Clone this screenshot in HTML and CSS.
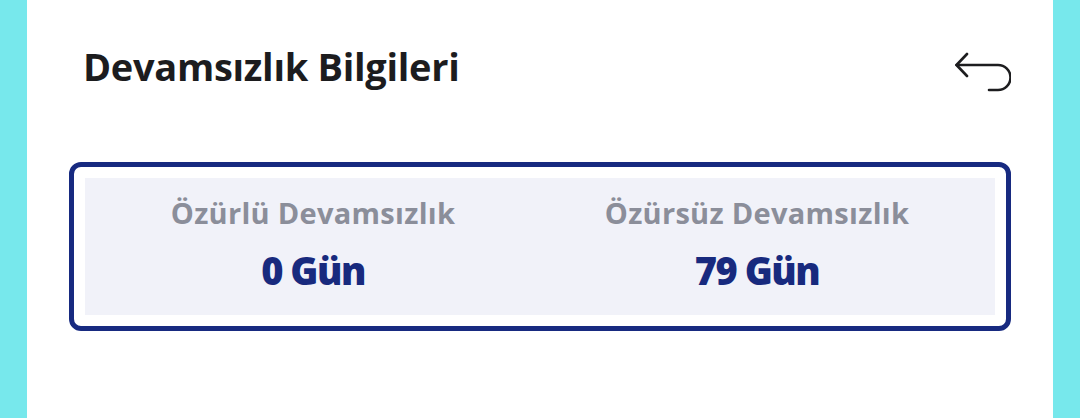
FILE: index.html
```html
<!DOCTYPE html>
<html lang="tr">
<head>
  <meta charset="UTF-8">
  <meta name="viewport" content="width=device-width, initial-scale=1.0">
  <title>Devamsızlık Bilgileri</title>
  <link rel="stylesheet" href="styles.css">
</head>
<body>
  <div class="panel">
    <div class="panel-header">
      <h2>Devamsızlık Bilgileri</h2>
      <button type="button" class="back-btn" aria-label="Geri">
        <svg width="56" height="40" viewBox="0 0 56 40" fill="none" stroke="#1d1d1f" stroke-width="2.6" stroke-linecap="round" stroke-linejoin="round">
          <path d="M12 2 L1.5 13 L12 24"/>
          <path d="M1.5 13 H43 A12.5 12.5 0 0 1 43 38 H34"/>
        </svg>
      </button>
    </div>

    <div class="absence-card">
      <div class="absence-summary">
        <div class="absence-item">
          <span class="absence-label">Özürlü Devamsızlık</span>
          <span class="absence-value">0 Gün</span>
        </div>
        <div class="absence-item">
          <span class="absence-label">Özürsüz Devamsızlık</span>
          <span class="absence-value">79 Gün</span>
        </div>
      </div>
    </div>
  </div>
</body>
</html>
```

FILE: styles.css
```css
body {
  font-family: 'Open Sans', 'Noto Sans', sans-serif;
  background-color: #77e8ec;
  margin: 0;
  height: 418px;
  overflow: hidden;
}

.panel {
  background-color: #fff;
  margin: 0 27px;
  height: 418px;
  padding: 44px 42px 0;
  box-sizing: border-box;
}

.panel-header {
  display: flex;
  justify-content: space-between;
  align-items: flex-start;
  padding-left: 14px;
  margin-bottom: 70px;
}

.panel-header h2 {
  margin: 0;
  font-size: 38px;
  line-height: 44px;
  font-weight: 700;
  letter-spacing: -0.3px;
  color: #1c1c1e;
}

.back-btn {
  border: none;
  background: none;
  padding: 0;
  margin-top: 8px;
  width: 56px;
  height: 40px;
  cursor: pointer;
}

.back-btn svg {
  display: block;
}

.absence-card {
  border: 5px solid #172a80;
  border-radius: 12px;
  padding: 11px;
  background-color: #fff;
}

.absence-summary {
  background-color: #f1f2f9;
  height: 137px;
  display: grid;
  grid-template-columns: 1fr 1fr;
  padding: 18px 16px 0 6px;
  box-sizing: border-box;
}

.absence-item {
  display: flex;
  flex-direction: column;
  align-items: center;
  gap: 19px;
}

.absence-label {
  font-size: 29px;
  line-height: 34px;
  font-weight: 700;
  letter-spacing: 0.3px;
  color: #8b8e9a;
}

.absence-value {
  font-size: 38px;
  line-height: 42px;
  font-weight: 800;
  letter-spacing: -1.5px;
  color: #182a7e;
}
```
